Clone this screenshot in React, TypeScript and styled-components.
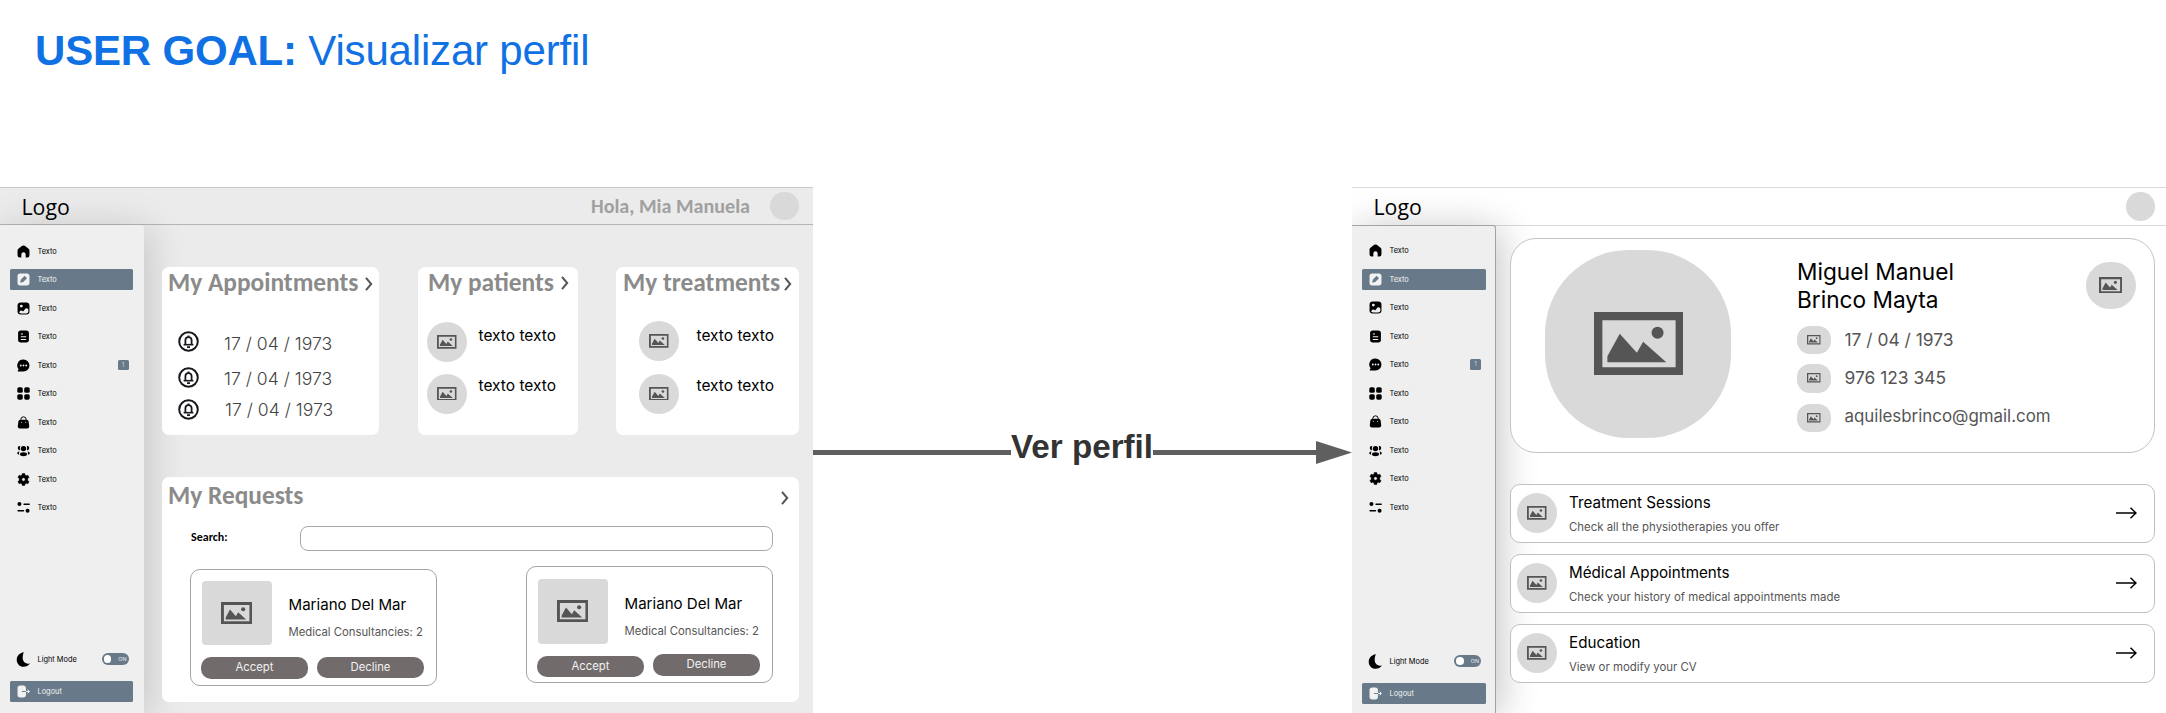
import React from "react";
import styled, { createGlobalStyle } from "styled-components";

const slate = "#687a89";
const inter = `Inter, "Liberation Sans", sans-serif`;
const carlito = `Carlito, Lato, sans-serif`;

const GlobalStyle = createGlobalStyle`
  *, *::before, *::after { box-sizing: border-box; }
  body { margin: 0; background: #fff; font-family: ${inter}; color: #000; overflow: hidden; }
  svg { display: block; flex: none; }
`;

/* ---------- page ---------- */

const Page = styled.div`
  width: 2166px;
  height: 713px;
  display: flex;
  flex-direction: column;
  overflow: hidden;
`;

const Goal = styled.h1`
  flex: none;
  height: 187px;
  margin: 0;
  padding-left: 35px;
  font: 400 42px/101px "Liberation Sans", sans-serif;
  letter-spacing: -0.18px;
  color: #1071e5;
  white-space: pre;
`;

const Flow = styled.div`
  flex: 1;
  display: grid;
  grid-template-columns: 813px 539px 814px;
  min-height: 0;
`;

const Screen = styled.section<{ $bg: string }>`
  display: flex;
  flex-direction: column;
  overflow: hidden;
  background: ${(p) => p.$bg};
`;

const Body = styled.div`
  flex: 1;
  display: flex;
  min-height: 0;
`;

/* ---------- connector ---------- */

const Connector = styled.div`
  display: flex;
  align-items: center;
  height: 36px;
  margin-top: 247px;
`;

const Line = styled.div<{ $w: number }>`
  flex: none;
  width: ${(p) => p.$w}px;
  height: 5px;
  background: #5f5f5f;
`;

const ConnectorLabel = styled.span`
  flex: none;
  width: 142px;
  margin-top: -10.5px;
  font: 700 33.2px/36px "Liberation Sans", sans-serif;
  color: #333;
  white-space: nowrap;
`;

/* ---------- header ---------- */

const Header = styled.header<{ $h: number; $top: string; $bottom: string }>`
  flex: none;
  display: flex;
  align-items: center;
  height: ${(p) => p.$h}px;
  padding-left: 21.5px;
  border-top: 1px solid ${(p) => p.$top};
  border-bottom: 1px solid ${(p) => p.$bottom};
`;

const Logo = styled.span`
  margin-top: 1px;
  font: 400 21.3px/30px "Open Sans", sans-serif;
`;

const Greeting = styled.span`
  margin-left: auto;
  font: 700 20.1px/30px ${carlito};
  color: #a0a0a0;
`;

const HeaderAvatar = styled.div<{ $left: string; $right: number }>`
  width: 28.5px;
  height: 28.5px;
  margin: 0 ${(p) => p.$right}px 0 ${(p) => p.$left};
  border-radius: 50%;
  background: #d9d9d9;
`;

/* ---------- sidebar ---------- */

const Side = styled.nav<{ $outlined?: boolean }>`
  flex: none;
  display: flex;
  flex-direction: column;
  width: 144px;
  margin-top: ${(p) => (p.$outlined ? -1 : 0)}px;
  padding: ${(p) => (p.$outlined ? "14px 9.5px 9.5px 9.5px" : "15.5px 11px 11.5px 9.5px")};
  background: #efefef;
  border: ${(p) => (p.$outlined ? "solid #a3a3a3" : "solid transparent")};
  border-width: ${(p) => (p.$outlined ? "1px 1px 0 0" : "0")};
  border-radius: 0 3px 0 0;
  box-shadow: 4px 4px 38px rgba(0, 0, 0, ${(p) => (p.$outlined ? 0.24 : 0.17)});
`;

const SideItem = styled.div<{ $active?: boolean }>`
  flex: none;
  display: flex;
  align-items: center;
  height: 21px;
  margin-bottom: 7.5px;
  padding: 0 4.5px 0 7.5px;
  border-radius: 1.5px;
  background: ${(p) => (p.$active ? slate : "transparent")};
  color: ${(p) => (p.$active ? "#f2f2f2" : "#000")};
`;

const SideText = styled.span`
  margin-left: 7.5px;
  font: 400 7.4px/21px ${inter};
  white-space: nowrap;
`;

const Spacer = styled.div`
  flex: 1;
`;

const Badge = styled.span`
  width: 11px;
  height: 10.5px;
  margin-left: auto;
  border-radius: 1.5px;
  background: ${slate};
  color: #c9d1d8;
  font: 400 6px/10.5px ${inter};
  text-align: center;
`;

const Toggle = styled.span`
  display: flex;
  align-items: center;
  justify-content: space-between;
  width: 27px;
  height: 11.5px;
  margin-left: auto;
  padding: 0 2px;
  border-radius: 6px;
  background: ${slate};
  color: #e8ecef;
  font: 400 5.4px/11px ${inter};
`;

const Knob = styled.i`
  width: 7.5px;
  height: 7.5px;
  border-radius: 50%;
  background: #fff;
`;

const LightRow = styled(SideItem)`
  margin-bottom: 11px;
`;

const LogoutRow = styled(SideItem)`
  margin-bottom: 0;
`;

/* ---------- dashboard ---------- */

const Dashboard = styled.main`
  flex: 1;
  display: flex;
  flex-direction: column;
  gap: 42px;
  padding: 42px 14px 0 18px;
`;

const CardRow = styled.div`
  display: flex;
  justify-content: space-between;
  height: 168px;
`;

const Card = styled.section<{ $w?: number }>`
  width: ${(p) => (p.$w ? `${p.$w}px` : "auto")};
  border-radius: 7px;
  background: #fff;
`;

const RequestsCard = styled(Card)`
  height: 224.5px;
`;

const CardHead = styled.div<{ $h: number; $l: number; $r: number }>`
  display: flex;
  align-items: center;
  justify-content: space-between;
  height: ${(p) => p.$h}px;
  padding: 0 ${(p) => p.$r}px 0 ${(p) => p.$l}px;
`;

const CardTitle = styled.h2`
  margin: 1px 0 0;
  font: 700 25.4px/30px ${carlito};
  color: #8b8b8b;
  white-space: nowrap;
`;

const ChevronSvg = styled.svg<{ $drop: number }>`
  margin-top: ${(p) => p.$drop}px;
`;

const List = styled.div<{ $rows: string; $top: number; $left: number; $gap: number }>`
  display: grid;
  grid-template-rows: ${(p) => p.$rows};
  grid-template-columns: auto 1fr;
  column-gap: ${(p) => p.$gap}px;
  align-items: start;
  padding: ${(p) => p.$top}px 0 0 ${(p) => p.$left}px;
`;

const DateText = styled.span<{ $shift: number; $indent?: number }>`
  margin: ${(p) => p.$shift}px 0 0 ${(p) => p.$indent ?? 0}px;
  font: 300 17.6px/20px ${inter};
  color: #444;
  white-space: nowrap;
`;

const PersonText = styled.span<{ $shift: number }>`
  margin-top: ${(p) => p.$shift}px;
  font: 400 15.5px/20px ${inter};
  white-space: nowrap;
`;

const Thumb = styled.div<{ $w: number; $h: number; $r: number }>`
  flex: none;
  display: flex;
  align-items: center;
  justify-content: center;
  width: ${(p) => p.$w}px;
  height: ${(p) => p.$h}px;
  border-radius: ${(p) => p.$r}px;
  background: #d9d9d9;
`;

const SearchRow = styled.label`
  display: flex;
  height: 24.5px;
  margin: 13px 26px 0 29px;
`;

const SearchLabel = styled.span`
  width: 109px;
  font: 700 12px/23px ${carlito};
`;

const SearchInput = styled.input`
  flex: 1;
  height: 24.5px;
  border: 1px solid #a8a8a8;
  border-radius: 8px;
  background: #fff;
`;

const Requests = styled.div`
  display: flex;
  justify-content: space-between;
  align-items: flex-start;
  padding: 15.5px 26px 0 28px;
`;

const RequestBox = styled.article<{ $top: number; $pad: number }>`
  display: flex;
  flex-direction: column;
  gap: 11px;
  width: 247px;
  height: 117px;
  margin-top: ${(p) => p.$top}px;
  padding: ${(p) => p.$pad}px 11px 0;
  border: 1px solid #a4a4a4;
  border-radius: 10px;
`;

const RequestInfo = styled.div`
  display: flex;
  gap: 17px;
`;

const RequestText = styled.div`
  display: flex;
  flex-direction: column;
  padding-top: 11.5px;
`;

const PatientName = styled.span`
  font: 400 15.1px/26px ${inter};
  white-space: nowrap;
`;

const PatientMeta = styled.span`
  font: 400 11.3px/28px ${inter};
  color: #555;
  white-space: nowrap;
`;

const Actions = styled.div`
  display: flex;
  gap: 10px;
`;

const ActionButton = styled.button<{ $lift: number }>`
  width: 107px;
  height: 21.5px;
  margin: ${(p) => -p.$lift}px 0 0 -1px;
  padding: 0;
  border: 0;
  border-radius: 10px;
  background: #716b6b;
  color: #f2f2f2;
  font: 400 11.3px/21.5px ${inter};
`;

/* ---------- profile ---------- */

const ProfileMain = styled.main`
  flex: 1;
  padding: 12px 11px 0 14px;
`;

const ProfileCard = styled.section`
  display: flex;
  align-items: flex-start;
  height: 215px;
  padding: 0 18.5px 0 34px;
  border: 1px solid #c4c4c4;
  border-radius: 26px;
  background: #fff;
`;

const Portrait = styled(Thumb)`
  margin-top: 11px;
`;

const Identity = styled.div`
  margin: 19px auto 0 66px;
`;

const FullName = styled.h3`
  margin: 0 0 11.5px;
  font: 400 22.65px/28px ${inter};
`;

const Contact = styled.div<{ $gap: number }>`
  display: flex;
  align-items: center;
  gap: 13.5px;
  margin-bottom: ${(p) => p.$gap}px;
`;

const ContactText = styled.span<{ $size: number; $lift?: number }>`
  margin-top: ${(p) => -(p.$lift ?? 0)}px;
  font: 400 ${(p) => p.$size}px/20px ${inter};
  color: #555;
`;

const EditPhoto = styled(Thumb)`
  margin-top: 22.5px;
`;

const LinkList = styled.div`
  display: flex;
  flex-direction: column;
  gap: 11.5px;
  margin-top: 31px;
`;

const LinkRow = styled.a`
  display: flex;
  align-items: center;
  height: 58.5px;
  padding: 0 17px 0 6px;
  border: 1px solid #c0c0c0;
  border-radius: 10px;
  background: #fff;
`;

const LinkText = styled.div`
  display: flex;
  flex-direction: column;
  margin: 3px auto 0 12px;
`;

const LinkTitle = styled.span`
  font: 400 15.2px/24px ${inter};
`;

const LinkSub = styled.span`
  font: 400 11.4px/24.5px ${inter};
  color: #555;
`;

/* ---------- drawings ---------- */

const Picture = ({ w }: { w: number }) => (
  <svg width={w} height={(w * 188) / 266} viewBox="0 0 266 188" fill="#555">
    <path fillRule="evenodd" d="M0 0h266v188H0zM25 25v140h219V25z" />
    <path d="M40 150v-18l37-67 51 57 19-33 69 61z" />
    <circle cx="190" cy="62" r="18" />
  </svg>
);

const Chevron = ({ drop = 0 }: { drop?: number }) => (
  <ChevronSvg $drop={drop} width="8" height="14" viewBox="0 0 8 14" fill="none" stroke="#555" strokeWidth="2">
    <path d="M1 .8 6.2 7 1 13.2" />
  </ChevronSvg>
);

const Bell = () => (
  <svg width="21" height="21" viewBox="0 0 21 21" fill="none" stroke="#16181d">
    <circle cx="10.5" cy="10.5" r="9.3" strokeWidth="2" />
    <path d="M7.4 13.6V9.2a3.1 3.1 0 0 1 6.2 0v4.4" strokeWidth="1.8" />
    <path d="M5.6 13.7h9.8" strokeWidth="1.6" />
    <path d="M10.5 4.4v1.800M9 16.200h3" strokeWidth="1.8" />
  </svg>
);

const Arrow = () => (
  <svg width="21" height="12" viewBox="0 0 21 12" fill="none" stroke="#000" strokeWidth="1.5">
    <path d="M0 6h20M14.5 .8 20 6l-5.500 5.200" />
  </svg>
);

const glyphs: Record<string, React.ReactNode> = {
  home: <path d="M9.600 1.600a4 4 0 0 1 4.800 0l7 5.400A4 4 0 0 1 23 10.200V19a4 4 0 0 1-4 4h-3v-5.500a4 4 0 0 0-8 0V23H5a4 4 0 0 1-4-4v-8.800A4 4 0 0 1 2.600 7z" />,
  edit: (
    <>
      <rect x="1" y="1" width="22" height="22" rx="5" />
      <path d="m6 18 1-5.500 7-7.500 4.500 4.500-7 7z" fill={slate} />
    </>
  ),
  image: (
    <>
      <rect x="1" y="1" width="22" height="22" rx="6" />
      <circle cx="8" cy="7.500" r="2.600" fill="#efefef" />
      <path d="M4 19c2-3.500 4-4.500 6-2.500 2 1.500 3-.500 4.500-3 2-3 4.500-2 6.500.500v3.500a4 4 0 0 1-4 3.500H7.500C5.500 21 4.500 20 4 19z" fill="#efefef" />
    </>
  ),
  doc: (
    <>
      <rect x="2" y="1" width="20" height="22" rx="5" />
      <path d="M7 7.500h4M7 12.500h10M7 17.500h10" stroke="#efefef" strokeWidth="2" />
    </>
  ),
  chat: (
    <>
      <path d="M12 1a11 11 0 1 1 0 22H2.500c-1 0-1.500-1-.900-1.800L3 19A11 11 0 0 1 12 1z" />
      <g fill="#efefef">
        <circle cx="7" cy="12" r="1.700" />
        <circle cx="12" cy="12" r="1.700" />
        <circle cx="17" cy="12" r="1.700" />
      </g>
    </>
  ),
  grid: (
    <>
      <rect x=".5" y=".5" width="10.200" height="10.200" rx="3" />
      <rect x="13.300" y=".5" width="10.200" height="10.200" rx="3" />
      <rect x=".5" y="13.300" width="10.200" height="10.200" rx="3" />
      <rect x="13.300" y="13.300" width="10.200" height="10.200" rx="3" />
    </>
  ),
  bag: (
    <>
      <path d="M7 9V6.500a5 5 0 0 1 10 0V9" fill="none" stroke="#000" strokeWidth="1.800" />
      <path d="M7 7h10c3 0 4.200 1.500 4.600 4l.900 7c.400 3.500-1 5-4 5h-13c-3 0-4.400-1.500-4-5l.900-7C2.800 8.500 4 7 7 7z" />
      <circle cx="8" cy="11.500" r="1" fill="#efefef" />
      <circle cx="16" cy="11.500" r="1" fill="#efefef" />
    </>
  ),
  users: (
    <>
      <circle cx="12" cy="8.500" r="5" />
      <ellipse cx="12" cy="19" rx="6.500" ry="3.600" />
      <path d="M6 4a3.700 3.700 0 1 0 0 7.200C5 9 5 6 6 4zM18 4a3.700 3.700 0 1 1 0 7.200C19 9 19 6 18 4zM4.500 14C2 14.200.500 15.500.500 17s1.500 2.600 3.500 2.800c-.500-2-.500-4 .500-5.800zM19.500 14c2.500.200 4 1.500 4 3s-1.500 2.600-3.500 2.800c.500-2 .500-4-.500-5.800z" />
    </>
  ),
  gear: (
    <path
      fillRule="evenodd"
      d="M9.800 1h4.400l.800 3.200 1.800 1 3.200-1 2.200 3.800-2.400 2.400v3.200l2.400 2.400-2.200 3.800-3.200-1-1.800 1-.800 3.200H9.800L9 19.800l-1.800-1-3.200 1L1.800 16l2.400-2.400v-3.200L1.800 8 4 4.200l3.200 1 1.800-1zM12 8.800a3.200 3.200 0 1 0 0 6.400 3.200 3.200 0 0 0 0-6.400z"
      stroke="#000"
      strokeLinejoin="round"
      strokeWidth="1"
    />
  ),
  sliders: (
    <>
      <circle cx="4.500" cy="5.500" r="3.700" />
      <circle cx="19.500" cy="18" r="3.700" />
      <path d="M13 6h9.500M2 18h10" stroke="#000" strokeWidth="2.600" strokeLinecap="round" />
    </>
  ),
  moon: <path d="M12.500-1.500C4.500-.5-.5 5.500-.5 12.500c0 7.500 5.500 13 12.500 13 5 0 9.500-2.200 12-6C16 20.500 10.500 16 10.500 9c0-4.500 1-7.500 2-10.500z" />,
  logout: (
    <>
      <path d="M6 1h5.500a5 5 0 0 1 5 5v12a5 5 0 0 1-5 5H6a5 5 0 0 1-5-5V6a5 5 0 0 1 5-5z" />
      <path d="M9 12h7.500" stroke={slate} strokeWidth="1.800" />
      <path d="M16.500 12h6M19.500 8.500 23 12l-3.500 3.500" stroke="#f2f2f2" strokeWidth="1.800" fill="none" />
    </>
  ),
};

const Glyph = ({ name }: { name: string }) => (
  <svg width="13" height="13" viewBox="0 0 24 24" fill="currentColor" overflow="visible">
    {glyphs[name]}
  </svg>
);

/* ---------- parts ---------- */

const menu = ["home", "edit", "image", "doc", "chat", "grid", "bag", "users", "gear", "sliders"];

const Sidebar = ({ outlined }: { outlined?: boolean }) => (
  <Side $outlined={outlined}>
    {menu.map((name) => (
      <SideItem key={name} $active={name === "edit"}>
        <Glyph name={name} />
        <SideText>Texto</SideText>
        {name === "chat" && <Badge>1</Badge>}
      </SideItem>
    ))}
    <Spacer />
    <LightRow>
      <Glyph name="moon" />
      <SideText>Light Mode</SideText>
      <Toggle>
        <Knob />
        ON
      </Toggle>
    </LightRow>
    <LogoutRow $active>
      <Glyph name="logout" />
      <SideText>Logout</SideText>
    </LogoutRow>
  </Side>
);

const PictureDot = () => (
  <Thumb $w={40} $h={40} $r={20}>
    <Picture w={19.5} />
  </Thumb>
);

const Request = ({ top, pad, lift }: { top: number; pad: number; lift: number }) => (
  <RequestBox $top={top} $pad={pad}>
    <RequestInfo>
      <Thumb $w={69.5} $h={64.5} $r={4}>
        <Picture w={31} />
      </Thumb>
      <RequestText>
        <PatientName>Mariano Del Mar</PatientName>
        <PatientMeta>Medical Consultancies: 2</PatientMeta>
      </RequestText>
    </RequestInfo>
    <Actions>
      <ActionButton $lift={0}>Accept</ActionButton>
      <ActionButton $lift={lift}>Decline</ActionButton>
    </Actions>
  </RequestBox>
);

const links = [
  ["Treatment Sessions", "Check all the physiotherapies you offer"],
  ["Médical Appointments", "Check your history of medical appointments made"],
  ["Education", "View or modify your CV"],
];

const HomeScreen = () => (
  <Screen $bg="#ebebeb">
    <Header $h={38} $top="#c9c9c9" $bottom="#b5b5b5">
      <Logo>Logo</Logo>
      <Greeting>Hola, Mia Manuela</Greeting>
      <HeaderAvatar $left="20px" $right={14.5} />
    </Header>
    <Body>
      <Sidebar />
      <Dashboard>
        <CardRow>
          <Card $w={217}>
            <CardHead $h={30} $l={6} $r={6}>
              <CardTitle>My Appointments</CardTitle>
              <Chevron drop={3} />
            </CardHead>
            <List $rows="35.5px 32px 25px" $top={34} $left={16} $gap={25}>
              <Bell />
              <DateText $shift={3}>17 / 04 / 1973</DateText>
              <Bell />
              <DateText $shift={2.5}>17 / 04 / 1973</DateText>
              <Bell />
              <DateText $shift={1.5} $indent={1}>
                17 / 04 / 1973
              </DateText>
            </List>
          </Card>
          <Card $w={160}>
            <CardHead $h={30} $l={10.5} $r={9}>
              <CardTitle>My patients</CardTitle>
              <Chevron drop={1} />
            </CardHead>
            <List $rows="51.5px 40px" $top={25} $left={9.5} $gap={11.5}>
              <PictureDot />
              <PersonText $shift={3.5}>texto texto</PersonText>
              <PictureDot />
              <PersonText $shift={2}>texto texto</PersonText>
            </List>
          </Card>
          <Card $w={183}>
            <CardHead $h={30} $l={7} $r={7}>
              <CardTitle>My treatments</CardTitle>
              <Chevron drop={4} />
            </CardHead>
            <List $rows="52.5px 40px" $top={24} $left={23} $gap={17.5}>
              <PictureDot />
              <PersonText $shift={4.5}>texto texto</PersonText>
              <PictureDot />
              <PersonText $shift={2}>texto texto</PersonText>
            </List>
          </Card>
        </CardRow>
        <RequestsCard>
          <CardHead $h={36} $l={6} $r={10}>
            <CardTitle>My Requests</CardTitle>
            <Chevron drop={5} />
          </CardHead>
          <SearchRow>
            <SearchLabel>Search:</SearchLabel>
            <SearchInput />
          </SearchRow>
          <Requests>
            <Request top={3} pad={10.5} lift={0.5} />
            <Request top={0} pad={12} lift={1.5} />
          </Requests>
        </RequestsCard>
      </Dashboard>
    </Body>
  </Screen>
);

const ProfileScreen = () => (
  <Screen $bg="#fff">
    <Header $h={39} $top="#dadada" $bottom="#dadada">
      <Logo>Logo</Logo>
      <HeaderAvatar $left="auto" $right={11.5} />
    </Header>
    <Body>
      <Sidebar outlined />
      <ProfileMain>
        <ProfileCard>
          <Portrait $w={186} $h={187.5} $r={84}>
            <Picture w={89} />
          </Portrait>
          <Identity>
            <FullName>
              Miguel Manuel
              <br />
              Brinco Mayta
            </FullName>
            <Contact $gap={10}>
              <Thumb $w={34} $h={28.5} $r={13}>
                <Picture w={13.5} />
              </Thumb>
              <ContactText $size={17.4}>17 / 04 / 1973</ContactText>
            </Contact>
            <Contact $gap={11}>
              <Thumb $w={34} $h={28.5} $r={13}>
                <Picture w={13.5} />
              </Thumb>
              <ContactText $size={17.4}>976 123 345</ContactText>
            </Contact>
            <Contact $gap={0}>
              <Thumb $w={34} $h={28.5} $r={13}>
                <Picture w={13.5} />
              </Thumb>
              <ContactText $size={16.9} $lift={3}>
                aquilesbrinco@gmail.com
              </ContactText>
            </Contact>
          </Identity>
          <EditPhoto $w={50} $h={47.5} $r={24}>
            <Picture w={23} />
          </EditPhoto>
        </ProfileCard>
        <LinkList>
          {links.map(([title, sub]) => (
            <LinkRow key={title}>
              <PictureDot />
              <LinkText>
                <LinkTitle>{title}</LinkTitle>
                <LinkSub>{sub}</LinkSub>
              </LinkText>
              <Arrow />
            </LinkRow>
          ))}
        </LinkList>
      </ProfileMain>
    </Body>
  </Screen>
);

export default function App() {
  return (
    <>
      <GlobalStyle />
      <Page>
        <Goal>
          <b>USER GOAL:</b> Visualizar perfil
        </Goal>
        <Flow>
          <HomeScreen />
          <Connector>
            <Line $w={198} />
            <ConnectorLabel>Ver perfil</ConnectorLabel>
            <Line $w={163} />
            <svg width="36" height="23" viewBox="0 0 36 23" fill="#5f5f5f">
              <path d="M0 0l36 11.500L0 23z" />
            </svg>
          </Connector>
          <ProfileScreen />
        </Flow>
      </Page>
    </>
  );
}
